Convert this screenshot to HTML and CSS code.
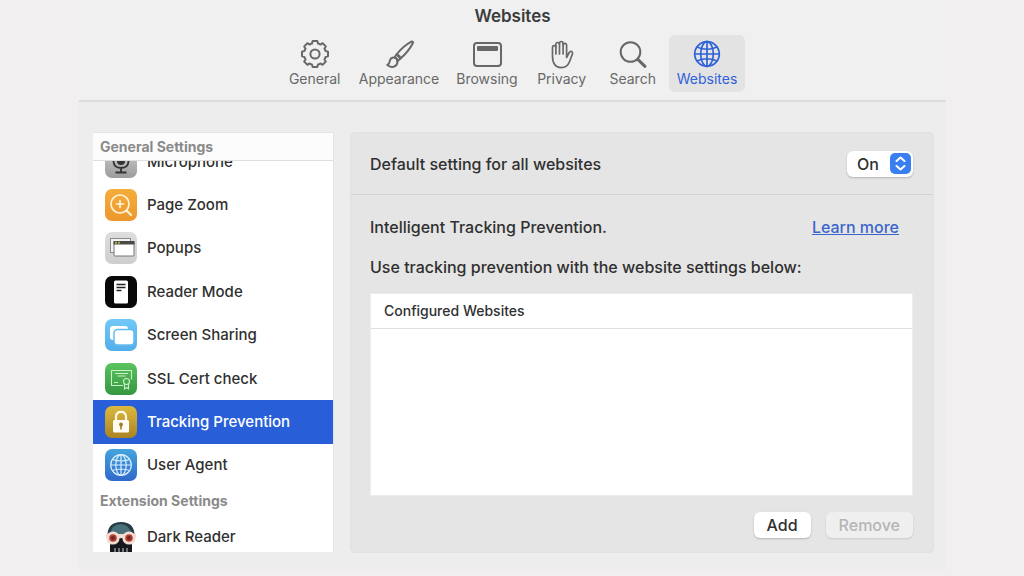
FILE: index.html
```html
<!DOCTYPE html>
<html lang="en">
<head>
  <meta charset="UTF-8" />
  <meta name="viewport" content="width=device-width, initial-scale=1" />
  <title>Websites</title>
  <link rel="stylesheet" href="styles.css">
</head>
<body>
  <div class="window">
    <header class="titlebar">
      <h1>Websites</h1>
      <nav class="toolbar">
        <button class="tab" type="button">
          <svg class="line-icon" viewBox="0 0 30 30">
            <g transform="translate(15 15)">
              <path d="M-2.3-13H2.3L3.1-10.4Q4.4-10.2 5.3-9.4L7.6-10.8L10.8-7.6L9.4-5.3Q10.2-4.4 10.4-3.1L13-2.3V2.3L10.4 3.1Q10.2 4.4 9.4 5.3L10.8 7.6L7.6 10.8L5.3 9.4Q4.4 10.2 3.1 10.4L2.3 13H-2.3L-3.1 10.4Q-4.4 10.2-5.3 9.4L-7.6 10.8L-10.8 7.6L-9.4 5.3Q-10.2 4.4-10.4 3.1L-13 2.3V-2.3L-10.4-3.1Q-10.2-4.4-9.4-5.3L-10.8-7.6L-7.6-10.8L-5.3-9.4Q-4.4-10.2-3.1-10.4Z" />
              <circle r="4.6" />
            </g>
          </svg>
          <span>General</span>
        </button>
        <button class="tab" type="button">
          <svg class="line-icon" viewBox="0 0 30 30">
            <path d="M12.5 15.5Q19 7 27 2.8Q29.6 2 28.7 4.5Q24.5 12.5 16.5 19.5Z" />
            <path d="M12.5 15.5L10.5 18.5Q13 19 13.5 22L16.5 19.5Q16 16.5 12.5 15.5Z" />
            <path d="M10.5 18.5Q6.5 18.2 5.8 22Q5.5 24.8 3.3 26Q6 28.5 9.5 27.7Q13.8 26.3 13.5 22Q13 19 10.5 18.5Z" />
          </svg>
          <span>Appearance</span>
        </button>
        <button class="tab" type="button">
          <svg class="line-icon" viewBox="0 0 30 30">
            <rect x="2" y="4" width="27" height="23" rx="3" />
            <rect class="solid" x="5" y="7" width="21" height="5" rx="1" />
          </svg>
          <span>Browsing</span>
        </button>
        <button class="tab" type="button">
          <svg class="line-icon medium" viewBox="0 0 30 30">
            <path d="M5.5 17V8.2Q5.6 6.6 7.2 6.6Q8.8 6.6 8.9 8.2V5Q9.1 3.5 10.7 3.5Q12.3 3.5 12.5 5V4Q12.7 2.5 14.3 2.5Q15.9 2.5 16.1 4V5.7Q16.4 4.3 17.9 4.3Q19.5 4.4 19.6 6V18.5L22.2 13.5Q23.3 11.8 24.9 12.6Q26 13.3 25.4 15L22.6 22.5Q20.3 28.6 14 28.6Q5.5 28.3 5.5 17Z" />
            <path d="M8.9 8V15M12.5 5V15M16.1 5V15" />
          </svg>
          <span>Privacy</span>
        </button>
        <button class="tab" type="button">
          <svg class="line-icon" viewBox="0 0 30 30">
            <circle cx="12.5" cy="13" r="9.8" />
            <path class="handle" d="M19.8 20.3L27 27.3" />
          </svg>
          <span>Search</span>
        </button>
        <button class="tab active" type="button">
          <svg class="line-icon medium" viewBox="0 0 30 30">
            <circle cx="15" cy="15" r="12.3" />
            <ellipse cx="15" cy="15" rx="6.3" ry="12.3" />
            <path d="M15 2.7V27.3M2.7 15H27.3M5 8Q15 12.5 25 8M5 22Q15 17.5 25 22" />
          </svg>
          <span>Websites</span>
        </button>
      </nav>
    </header>

    <main class="content">
      <aside class="sidebar">
        <h2 class="group-title pinned">General Settings</h2>
        <ul class="site-list scrolled">
          <li><a href="#microphone">
            <svg viewBox="0 0 32 32">
              <defs><linearGradient id="gray" x2="0" y2="1"><stop stop-color="#d2d2d2" /><stop offset="1" stop-color="#9c9c9c" /></linearGradient></defs>
              <rect width="32" height="32" rx="7" fill="url(#gray)" />
              <rect x="12" y="4" width="8" height="15" rx="4" fill="#333" />
              <path d="M8.5 14V15.5Q9 22 16 22Q23 22 23.5 15.5V14M16 22V26.5M10.5 26.5H21.5" fill="none" stroke="#333" stroke-width="1.8" />
            </svg>
            <span>Microphone</span>
          </a></li>
          <li><a href="#zoom">
            <svg viewBox="0 0 32 32">
              <defs><linearGradient id="orange" x2="0" y2="1"><stop stop-color="#f5ad3b" /><stop offset="1" stop-color="#ec972d" /></linearGradient></defs>
              <rect width="32" height="32" rx="7" fill="url(#orange)" />
              <g fill="none" stroke="#fff3da" stroke-width="1.7" stroke-linecap="round">
                <circle cx="15" cy="15" r="9" />
                <path d="M15 11.5V18.5M11.5 15H18.5" />
                <path d="M21.5 21.5L26 26" stroke-width="2.2" />
              </g>
            </svg>
            <span>Page Zoom</span>
          </a></li>
          <li><a href="#popups">
            <svg viewBox="0 0 32 32">
              <defs><linearGradient id="silver" x2="0" y2="1"><stop stop-color="#dedede" /><stop offset="1" stop-color="#cecece" /></linearGradient></defs>
              <rect width="32" height="32" rx="7" fill="url(#silver)" />
              <rect x="5.5" y="6.5" width="20" height="14" fill="#f3f3f3" stroke="#8b8b8b" />
              <rect x="9" y="9.5" width="20" height="14.5" rx="1" fill="#fff" stroke="#777" />
              <path d="M8.5 9H29.5V12.5H8.5Z" fill="#4b4b45" />
              <path d="M10 10.8H16" stroke="#b3a64b" stroke-width="2" stroke-dasharray="2 1" />
            </svg>
            <span>Popups</span>
          </a></li>
          <li><a href="#reader">
            <svg viewBox="0 0 32 32">
              <rect width="32" height="32" rx="7" fill="#080808" />
              <rect x="9" y="4.5" width="14" height="23" rx="1.5" fill="#fff" />
              <path d="M11.5 8.5H20.5M11.5 11.5H20.5M11.5 14.5H16.5" stroke="#222" stroke-width="1.5" />
            </svg>
            <span>Reader Mode</span>
          </a></li>
          <li><a href="#sharing">
            <svg viewBox="0 0 32 32">
              <defs><linearGradient id="sky" x2="0" y2="1"><stop stop-color="#72c9f7" /><stop offset="1" stop-color="#52aee9" /></linearGradient></defs>
              <rect width="32" height="32" rx="7" fill="url(#sky)" />
              <rect x="5" y="7" width="18" height="14" rx="3" fill="#fff" />
              <rect x="9" y="10.5" width="20" height="15.5" rx="3.5" fill="#fff" stroke="#61bbef" stroke-width="1.5" />
            </svg>
            <span>Screen Sharing</span>
          </a></li>
          <li><a href="#ssl">
            <svg viewBox="0 0 32 32">
              <defs><linearGradient id="green" x2="0" y2="1"><stop stop-color="#5bc35f" /><stop offset="1" stop-color="#35963f" /></linearGradient></defs>
              <rect width="32" height="32" rx="7" fill="url(#green)" />
              <g fill="none" stroke="#c9f0c7" stroke-width="1.1">
                <path d="M18 22.5H6.5V7.5H26.5V16.5" />
                <path d="M10 10.5H23M12.5 13H20.5M9 19.5H13" />
                <circle cx="21.5" cy="18.5" r="3" />
                <path d="M19.5 21V26L21.5 24.5L23.5 26V21" />
              </g>
            </svg>
            <span>SSL Cert check</span>
          </a></li>
          <li><a class="selected" href="#tracking" aria-current="true">
            <svg viewBox="0 0 32 32">
              <defs><linearGradient id="gold" x2="0" y2="1"><stop stop-color="#dcb93e" /><stop offset="1" stop-color="#a98422" /></linearGradient></defs>
              <rect width="32" height="32" rx="7" fill="url(#gold)" />
              <path d="M11 15V10.5Q11.3 5.8 16 5.8Q20.7 5.8 21 10.5V15" fill="none" stroke="#fff8e2" stroke-width="2.2" />
              <rect x="8" y="14" width="16" height="12.5" rx="1.5" fill="#fffdf5" />
              <path d="M16 19V23.5" stroke="#a37c22" stroke-width="1.6" />
              <circle cx="16" cy="18.5" r="1.9" fill="#a37c22" />
            </svg>
            <span>Tracking Prevention</span>
          </a></li>
          <li><a href="#agent">
            <svg viewBox="0 0 32 32">
              <defs><linearGradient id="blue" x2="0" y2="1"><stop stop-color="#45a5dc" /><stop offset="1" stop-color="#3068cb" /></linearGradient></defs>
              <rect width="32" height="32" rx="7" fill="url(#blue)" />
              <g fill="none" stroke="#d8efff" stroke-width="1.2">
                <circle cx="16" cy="16" r="10.3" />
                <ellipse cx="16" cy="16" rx="5.2" ry="10.3" />
                <path d="M16 5.7V26.3M5.7 16H26.3M7.5 10.5Q16 13.5 24.5 10.5M7.5 21.5Q16 18.5 24.5 21.5" />
              </g>
            </svg>
            <span>User Agent</span>
          </a></li>
        </ul>
        <h2 class="group-title">Extension Settings</h2>
        <ul class="site-list">
          <li><a href="#darkreader">
            <svg viewBox="0 0 32 32">
              <path d="M2.5 17Q1.5 1 16 1Q30.5 1 29.5 17L25 22V32H7V22Z" fill="#263b43" />
              <path d="M5 14Q6 3 16 3Q25 4 27 14Z" fill="#477078" />
              <path d="M8 18H24L27 24V32H5V24Z" fill="#15191d" />
              <path d="M10 27V32M14 27V32M18 27V32M22 27V32" stroke="#a9b2b4" stroke-width="1.2" />
              <path d="M1 13H31V17H1Z" fill="#f2ddd2" />
              <circle cx="8" cy="17" r="5.2" fill="#b63f32" stroke="#f2ddd2" stroke-width="2.8" />
              <circle cx="24" cy="17" r="5.2" fill="#b63f32" stroke="#f2ddd2" stroke-width="2.8" />
              <circle cx="8" cy="17" r="2" fill="#6d282a" />
              <circle cx="24" cy="17" r="2" fill="#6d282a" />
            </svg>
            <span>Dark Reader</span>
          </a></li>
        </ul>
      </aside>

      <section class="panel">
        <div class="default-row">
          <label for="default-setting">Default setting for all websites</label>
          <div class="popup">
            <select id="default-setting">
              <option>On</option>
              <option>Off</option>
            </select>
            <svg class="popup-arrows" viewBox="0 0 21 21">
              <rect width="21" height="21" rx="5" />
              <path d="M6.5 8L10.5 4.5L14.5 8M6.5 13L10.5 16.5L14.5 13" />
            </svg>
          </div>
        </div>
        <div class="panel-body">
          <div class="intro">
            <p>Intelligent Tracking Prevention.</p>
            <a href="#learn">Learn more</a>
          </div>
          <p class="hint">Use tracking prevention with the website settings below:</p>
          <div class="table-box">
            <table>
              <thead>
                <tr><th scope="col">Configured Websites</th></tr>
              </thead>
              <tbody></tbody>
            </table>
          </div>
          <div class="actions">
            <button type="button">Add</button>
            <button type="button" disabled>Remove</button>
          </div>
        </div>
      </section>
    </main>
  </div>
</body>
</html>
```
FILE: styles.css
```css
* {
  box-sizing: border-box;
}

body {
  margin: 0;
  padding: 0 78px 0 79px;
  background: #f1eff0;
  font-family: Inter, sans-serif;
  font-size: 16px;
  font-weight: 500;
  line-height: 20px;
  color: #303030;
}

h1, h2, p, ul {
  margin: 0;
  padding: 0;
}

button, select {
  font: inherit;
  color: inherit;
}

.window {
  background: #ededed;
}

/* Title and toolbar */
.titlebar {
  padding: 6px 0 8px;
  background: #f0f0f0;
  border-bottom: 2px solid #dcdcdc;
}

h1 {
  font-size: 17px;
  font-weight: 600;
  text-align: center;
  color: #3c3c3c;
}

.toolbar {
  display: flex;
  justify-content: center;
  gap: 1px;
  margin-top: 9px;
}

.tab {
  display: flex;
  flex-direction: column;
  align-items: center;
  min-width: 70px;
  padding: 4px 8px;
  border: none;
  border-radius: 6px;
  background: none;
  font-size: 14px;
  font-weight: 400;
  line-height: 19px;
  color: #686868;
}

.tab.active {
  background: #e3e3e3;
  color: #2f62d9;
}

.line-icon {
  width: 30px;
  height: 30px;
  fill: none;
  stroke: currentColor;
  stroke-width: 2;
  stroke-linejoin: round;
  stroke-linecap: round;
}

.line-icon.medium {
  stroke-width: 1.7;
}

.line-icon .solid {
  fill: currentColor;
  stroke: none;
}

.line-icon .handle {
  stroke-width: 3;
}

.content {
  display: flex;
  align-items: flex-start;
  gap: 16px;
  padding: 30px 12px 16px 14px;
}

/* Sidebar */
.sidebar {
  flex: 0 0 241px;
  height: 420px;
  overflow: hidden;
  background: #fff;
  border: 1px solid #e4e4e4;
  border-width: 1px 1px 0 0;
  font-size: 15px;
}

.group-title {
  padding: 0 7px;
  font-size: 14px;
  line-height: 28px;
  font-weight: 700;
  color: #8a8a8a;
}

.group-title.pinned {
  position: sticky;
  top: 0;
  z-index: 1;
  background: #fcfcfc;
  border-bottom: 1px solid #dedede;
  line-height: 27px;
}

.site-list {
  display: grid;
  grid-auto-rows: 43px;
  list-style: none;
}

/* first row sits partly under the pinned title */
.site-list.scrolled {
  grid-template-rows: repeat(8, 1fr);
  height: 347px;
  margin-top: -21px;
}

.site-list a {
  display: flex;
  align-items: center;
  gap: 10px;
  height: 100%;
  padding: 0 12px;
  color: inherit;
  text-decoration: none;
}

.site-list a.selected {
  background: #285fd8;
  color: #fff;
}

.site-list svg {
  flex: none;
  width: 32px;
  height: 32px;
}

/* Settings panel */
.panel {
  flex: 1;
  min-width: 0;
  background: #e5e5e5;
  border: 1px solid #e1e1e1;
  border-radius: 5px;
}

.default-row {
  display: flex;
  align-items: center;
  justify-content: space-between;
  height: 62px;
  padding: 0 20px 0 19px;
  border-bottom: 1px solid #d2d2d2;
}

.popup {
  position: relative;
}

.popup select {
  appearance: none;
  display: block;
  width: 66px;
  height: 26px;
  padding: 0 28px 0 10px;
  border: none;
  border-radius: 6px;
  background: #fff;
  box-shadow: 0 1px 2px rgba(0, 0, 0, 0.22);
}

.popup-arrows {
  position: absolute;
  top: 2px;
  right: 2px;
  width: 21px;
  height: 21px;
  fill: #3a7ff2;
  pointer-events: none;
}

.popup-arrows path {
  fill: none;
  stroke: #fff;
  stroke-width: 2;
  stroke-linecap: round;
  stroke-linejoin: round;
}

.panel-body {
  padding: 22px 20px 14px 19px;
}

.intro {
  display: flex;
  justify-content: space-between;
  padding-right: 14px;
}

.intro a {
  color: #3a66cc;
}

.hint {
  margin-top: 20px;
}

.table-box {
  height: 203px;
  margin-top: 16px;
  background: #fff;
  border: 1px solid #ececec;
}

table {
  width: 100%;
  border-collapse: collapse;
}

th {
  height: 34px;
  padding: 0 13px;
  border-bottom: 1px solid #e0e0e0;
  font-size: 14px;
  font-weight: 500;
  text-align: left;
}

.actions {
  display: flex;
  justify-content: flex-end;
  gap: 15px;
  margin-top: 16px;
}

.actions button {
  height: 26px;
  padding: 0 13px;
  border: none;
  border-radius: 6px;
  background: #fff;
  box-shadow: 0 1px 2px rgba(0, 0, 0, 0.22);
}

.actions button:disabled {
  background: #efefef;
  box-shadow: 0 1px 2px rgba(0, 0, 0, 0.12);
  color: #b5b5b5;
}
```
